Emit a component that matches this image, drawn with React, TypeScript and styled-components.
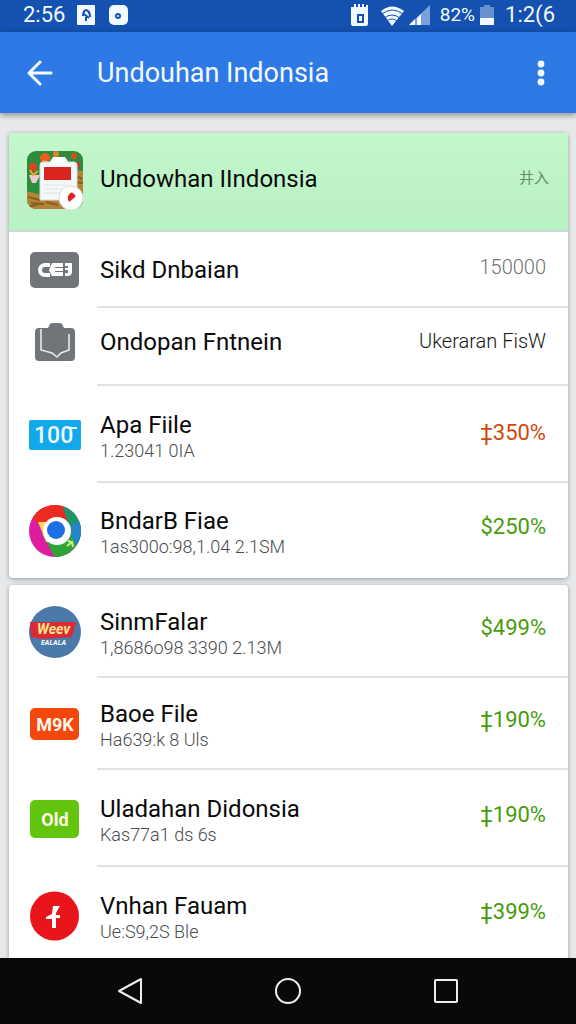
import React from "react";
import styled, { createGlobalStyle, css } from "styled-components";

const GlobalStyle = createGlobalStyle`
  *, *::before, *::after { box-sizing: border-box; }
  body {
    margin: 0;
    font-family: Roboto, "Noto Sans CJK SC", sans-serif;
    color: #0a0a0a;
    background: #e6e8e9;
  }
  h1, h2, p, ul { margin: 0; padding: 0; font-weight: 400; }
  ul { list-style: none; }
`;

const Screen = styled.div`
  display: flex;
  flex-direction: column;
  height: 100vh;
`;

const StatusBar = styled.div`
  flex: none;
  display: flex;
  align-items: center;
  justify-content: space-between;
  height: 32px;
  padding: 0 21px 2px 23px;
  background: #1451b0;
  color: #f2faff;
  font-size: 22px;
  line-height: 28px;
`;

const StatusGroup = styled.div<{ $gap: number }>`
  display: flex;
  align-items: center;
  gap: ${(p) => p.$gap}px;
`;

const Battery = styled.span`
  display: flex;
  align-items: center;
  gap: 4px;
  font-size: 19px;
`;

const AppBar = styled.header`
  flex: none;
  z-index: 1;
  display: flex;
  align-items: center;
  height: 81px;
  padding: 0 15px 0 20px;
  background: #2f79e6;
  color: #f2faff;
  box-shadow: 0 2px 6px rgba(0, 0, 0, 0.4);
`;

const AppTitle = styled.h1`
  flex: 1;
  padding-left: 37px;
  font-size: 27px;
  line-height: 32px;
`;

const IconButton = styled.button`
  display: flex;
  align-items: center;
  justify-content: center;
  width: 40px;
  height: 40px;
  padding: 0;
  border: 0;
  background: none;
  color: inherit;
  cursor: pointer;
`;

const Content = styled.main`
  flex: 1;
  min-height: 0;
  display: flex;
  flex-direction: column;
  gap: 7px;
  padding: 20px 8px 0 9px;
  overflow-y: auto;
  scrollbar-width: none;
`;

const Card = styled.ul`
  flex: none;
  border-radius: 4px;
  background: #fff;
  box-shadow: 0 1px 4px rgba(50, 60, 75, 0.45);
`;

const Body = styled.div`
  flex: 1;
  min-width: 0;
  display: flex;
  align-items: center;
  justify-content: space-between;
  gap: 12px;
  padding: 0 22px 0 3px;
  border-bottom: 2px solid #dfe1e4;
`;

const IconCell = styled.div`
  flex: none;
  display: flex;
  align-items: center;
  justify-content: center;
  width: 88px;
  padding-left: 3px;
`;

type Kind = "featured" | "single" | "raised" | "double";

const Row = styled.li<{ $height: number; $kind: Kind }>`
  display: flex;
  min-height: ${(p) => p.$height}px;
  &:last-child ${Body} { border-bottom-color: transparent; }
  ${(p) =>
    p.$kind === "featured" &&
    css`
      border-radius: 4px 4px 0 0;
      background: linear-gradient(#c3f7cc, #b8f1c3);
      border-bottom: 2px solid #ccd9d0;
      ${Body} { border-bottom: 0; padding-bottom: 8px; padding-right: 19px; }
      ${IconCell} { padding-bottom: 4px; }
    `}
  ${(p) =>
    p.$kind === "raised" &&
    css`
      ${Body} { padding-bottom: 10px; }
      ${IconCell} { padding-bottom: 10px; }
    `}
`;

const Texts = styled.div<{ $kind: Kind }>`
  padding-top: ${(p) => (p.$kind === "double" ? 6 : 2)}px;
`;

const Title = styled.h2`
  font-size: 24px;
  line-height: 28px;
  white-space: nowrap;
`;

const Detail = styled.p`
  color: #4a4c4f;
  font-size: 18px;
  font-weight: 300;
  line-height: 24px;
  white-space: nowrap;
`;

type Tone = "up" | "down" | "muted" | "plain" | "mark";

const tones: Record<Tone, ReturnType<typeof css>> = {
  up: css`color: #469c0c; font-size: 22px; padding-bottom: 6px;`,
  down: css`color: #d0480c; font-size: 22px; padding-bottom: 2px;`,
  muted: css`color: #6f7174; font-size: 20px; font-weight: 300; padding-bottom: 4px;`,
  plain: css`color: #161616; font-size: 20px; font-weight: 300;`,
  mark: css`color: #6b8c72; font-size: 15px;`,
};

const Value = styled.span<{ $tone: Tone }>`
  line-height: 26px;
  white-space: nowrap;
  ${(p) => tones[p.$tone]}
`;

const NavBar = styled.nav`
  flex: none;
  z-index: 1;
  display: flex;
  align-items: center;
  justify-content: center;
  gap: 118px;
  height: 66px;
  background: #090909;
  color: #eee;
`;

const FeaturedIcon = () => (
  <svg width="58" height="60" viewBox="0 0 58 60" aria-hidden="true">
    <defs>
      <clipPath id="tile"><rect x="1" y="1" width="56" height="58" rx="9" /></clipPath>
    </defs>
    <g clipPath="url(#tile)">
      <rect width="58" height="60" fill="#2c8c3b" />
      <path d="M0 41 L16 45 L46 20 L58 21 V60 H0Z" fill="#b48339" />
      <path d="M2 47l12 3M5 53l13 1M20 52l12 3M48 25l8 4M50 32l7 1M3 57l10-3" stroke="#84601f" strokeWidth="2" />
      <circle cx="19" cy="8" r="5" fill="#ea5d1c" />
      <circle cx="7" cy="17" r="4" fill="#e2411d" />
      <circle cx="48" cy="6" r="3" fill="#e4481f" />
      <circle cx="51" cy="15" r="3" fill="#dc2d28" />
      <circle cx="30" cy="4" r="3" fill="#ef7c2c" />
      <path d="M3 25h11l-4 8H6z" fill="#eccbd4" />
      <path d="M4 20l3 5 5-4M17 11l5 2" stroke="#f4a13a" strokeWidth="2" fill="none" />
    </g>
    <path d="M17 12h8l2-4h12l3 4h6q3 0 3 3v35H14V15q0-3 3-3Z" fill="#f5f8f8" stroke="#d5dddd" />
    <path d="M27 7h12l3 5H24Z" fill="#fff" />
    <rect x="18" y="17" width="27" height="13" fill="#da2420" />
    <path d="M18 35h24M18 39h22M18 43h18" stroke="#dce5ea" />
    <circle cx="45" cy="48" r="12" fill="#fff" stroke="#d8dedb" />
    <path d="M42 46q3-6 6-2 3 2 0 4l-5 4q-2-3-1-6Z" fill="#e02323" />
  </svg>
);

const CardIcon = () => (
  <svg width="50" height="38" viewBox="0 0 50 38" aria-hidden="true">
    <rect x="0" y="1" width="49" height="36" rx="5" fill="#717579" />
    <path d="M20 14h-5a5 5 0 0 0 0 10h5" fill="none" stroke="#fff" strokeWidth="4" />
    <path d="M22 12h11v4h-8v1h8v3h-8v1h8v4H22l-3-6Z" fill="#fff" />
    <path d="M35 12h7v9q0 4-5 4h-2v-3h3v-3h-3v-2h3v-2h-3z" fill="#fff" />
  </svg>
);

const ClipboardIcon = () => (
  <svg width="42" height="42" viewBox="0 0 42 42" aria-hidden="true">
    <path d="M5 7h9l2-4q1-1 3-1h6q2 0 3 1l2 4h7q4 0 4 4v25q0 4-4 4H5q-4 0-4-4V11q0-4 4-4Z" fill="#717579" />
    <path d="M7 8v21l11 3 5 4 4-4 8-3V13" fill="none" stroke="#e8eaea" strokeWidth="1.6" />
  </svg>
);

const HundredIcon = () => (
  <svg width="52" height="30" viewBox="0 0 52 30" aria-hidden="true">
    <rect x="0" y="0" width="52" height="30" rx="2" fill="#12a9ec" />
    <text x="5" y="23" fill="#edfaff" fontFamily="Roboto, sans-serif" fontSize="23" fontWeight="500">100</text>
    <path d="M40 8h8" stroke="#edfaff" strokeWidth="2" />
  </svg>
);

const BrowserIcon = () => (
  <svg width="52" height="54" viewBox="0 0 52 54" aria-hidden="true">
    <defs>
      <clipPath id="disc"><ellipse cx="26" cy="27" rx="26" ry="26" /></clipPath>
    </defs>
    <g clipPath="url(#disc)">
      <rect width="52" height="54" fill="#dd1ca0" />
      <path d="M0 15V0h36l4 20H10L4 15Z" fill="#eb2b22" />
      <path d="M33 0h19v36H37l2-17Z" fill="#1c9668" />
      <path d="M41 22l11-6v23l-8 3Z" fill="#2386c8" />
      <path d="M13 30l29 2 6 9-12 13H26Z" fill="#2da33a" />
      <path d="M9 18h17v20h-9Z" fill="#f8d75c" />
    </g>
    <circle cx="28" cy="27" r="14" fill="#fff" />
    <circle cx="27" cy="26" r="9" fill="#1b6fe0" />
    <path d="M38 42l5-4 1 5M42 38l-3-1" stroke="#c9f08c" strokeWidth="2" fill="none" />
  </svg>
);

const BadgeIcon = () => (
  <svg width="52" height="52" viewBox="0 0 52 52" aria-hidden="true">
    <circle cx="26" cy="26" r="26" fill="#4a79aa" />
    <path d="M1 16 L47 16 L43 31 L12 33 L2 31Z" fill="#dc2a35" />
    <g fontFamily="Roboto, sans-serif" fontStyle="italic" fontWeight="700">
      <text x="8" y="28" fill="#ffe68b" fontSize="14">Weev</text>
      <text x="12" y="39" fill="#fff" fontSize="7">EALALA</text>
    </g>
  </svg>
);

const TagIcon = ({ color, label, height }: { color: string; label: string; height: number }) => (
  <svg width="50" height={height} viewBox={`0 0 50 ${height}`} aria-hidden="true">
    <rect x="0" y="0" width="49" height={height} rx="5" fill={color} />
    <text x="25" y={height / 2 + 7} textAnchor="middle" fill="#fff6ea" fontFamily="Roboto, sans-serif" fontSize="18" fontWeight="700">
      {label}
    </text>
  </svg>
);

const FlashIcon = () => (
  <svg width="50" height="50" viewBox="0 0 50 50" aria-hidden="true">
    <circle cx="24.5" cy="25" r="24.5" fill="#ea151b" />
    <path d="M23 15h7l-4 7v2h4v3h-4v10h-4v-9h-6v-2l6-3Z" fill="#fff" />
  </svg>
);

type Item = {
  kind: Kind;
  height: number;
  icon: React.ReactNode;
  title: string;
  detail?: string;
  value: string;
  tone: Tone;
};

const cards: Item[][] = [
  [
    { kind: "featured", height: 99, icon: <FeaturedIcon />, title: "Undowhan IIndonsia", value: "井入", tone: "mark" },
    { kind: "single", height: 76, icon: <CardIcon />, title: "Sikd Dnbaian", value: "150000", tone: "muted" },
    { kind: "raised", height: 78, icon: <ClipboardIcon />, title: "Ondopan Fntnein", value: "Ukeraran FisW", tone: "plain" },
    { kind: "double", height: 97, icon: <HundredIcon />, title: "Apa Fiile", detail: "1.23041 0IA", value: "‡350%", tone: "down" },
    { kind: "double", height: 95, icon: <BrowserIcon />, title: "BndarB Fiae", detail: "1as300o:98,1.04 2.1SM", value: "$250%", tone: "up" },
  ],
  [
    { kind: "double", height: 93, icon: <BadgeIcon />, title: "SinmFalar", detail: "1,8686o98 3390 2.13M", value: "$499%", tone: "up" },
    { kind: "double", height: 92, icon: <TagIcon color="#f4470b" label="M9K" height={32} />, title: "Baoe File", detail: "Ha639:k 8 Uls", value: "‡190%", tone: "up" },
    { kind: "double", height: 97, icon: <TagIcon color="#62c40c" label="Old" height={38} />, title: "Uladahan Didonsia", detail: "Kas77a1 ds 6s", value: "‡190%", tone: "up" },
    { kind: "double", height: 97, icon: <FlashIcon />, title: "Vnhan Fauam", detail: "Ue:S9,2S Ble", value: "‡399%", tone: "up" },
  ],
];

export default function App() {
  return (
    <Screen>
      <GlobalStyle />
      <StatusBar>
        <StatusGroup $gap={12}>
          <span>2:56</span>
          <svg width="54" height="20" viewBox="0 0 54 20" aria-hidden="true">
            <rect x="0" y="0" width="18" height="20" rx="1" fill="#f2faff" />
            <path d="M6 11q0-5 3-6 4 1 4 7M7 9l5 4M9 12v4" stroke="#1451b0" strokeWidth="2" fill="none" />
            <rect x="32" y="0" width="19" height="20" rx="5" fill="#f2faff" />
            <circle cx="41" cy="11" r="3" fill="#1451b0" />
            <circle cx="41" cy="11" r="1" fill="#f2faff" />
          </svg>
        </StatusGroup>
        <StatusGroup $gap={10}>
          <svg width="80" height="22" viewBox="0 0 80 22" aria-hidden="true">
            <path d="M1 3h3V0h2v3h2V0h2v3h2V0h2v3h2V1h2v19q0 2-2 2H3q-2 0-2-2Z" fill="#f2faff" />
            <path d="M8 11h5v7H8z" fill="none" stroke="#1451b0" strokeWidth="2" />
            <path d="M31 7q11-9 23 0L42 22Z" fill="#f2faff" />
            <g fill="none" stroke="#1451b0">
              <path d="M32 10q10-8 21 0" />
              <path d="M34 14q8-6 16 0" />
              <path d="M37 17q5-4 10 0" />
            </g>
            <path d="M59 21L80 1v20Z" fill="#7ba1da" />
            <path d="M59 21l6-6v6zM67 14l4-4v11h-4z" fill="#f2faff" />
          </svg>
          <Battery>
            82%
            <svg width="16" height="22" viewBox="0 0 16 22" aria-hidden="true">
              <path d="M1 3h4V1h6v2h4v12H1Z" fill="#6790d0" />
              <path d="M1 14h14v7H1Z" fill="#f2faff" />
            </svg>
          </Battery>
          <span>1:2(6</span>
        </StatusGroup>
      </StatusBar>
      <AppBar>
        <IconButton aria-label="Back">
          <svg width="26" height="26" viewBox="0 0 26 26" fill="none" stroke="currentColor" strokeWidth="3" strokeLinecap="round" strokeLinejoin="round">
            <path d="M13 2L2 13l11 11M3 13h21" />
          </svg>
        </IconButton>
        <AppTitle>Undouhan Indonsia</AppTitle>
        <IconButton aria-label="More options">
          <svg width="8" height="26" viewBox="0 0 8 26" fill="currentColor">
            <circle cx="4" cy="4" r="3.4" />
            <circle cx="4" cy="13" r="3.4" />
            <circle cx="4" cy="22" r="3.4" />
          </svg>
        </IconButton>
      </AppBar>
      <Content>
        {cards.map((items, i) => (
          <Card key={i}>
            {items.map((item) => (
              <Row key={item.title} $height={item.height} $kind={item.kind}>
                <IconCell>{item.icon}</IconCell>
                <Body>
                  <Texts $kind={item.kind}>
                    <Title>{item.title}</Title>
                    {item.detail && <Detail>{item.detail}</Detail>}
                  </Texts>
                  <Value $tone={item.tone}>{item.value}</Value>
                </Body>
              </Row>
            ))}
          </Card>
        ))}
      </Content>
      <NavBar>
        <IconButton aria-label="Back">
          <svg width="26" height="28" viewBox="0 0 26 28" fill="none" stroke="currentColor" strokeWidth="2" strokeLinejoin="round">
            <path d="M2 14L24 2v24Z" />
          </svg>
        </IconButton>
        <IconButton aria-label="Home">
          <svg width="28" height="28" viewBox="0 0 28 28" fill="none" stroke="currentColor" strokeWidth="2">
            <circle cx="14" cy="14" r="12" />
          </svg>
        </IconButton>
        <IconButton aria-label="Recent apps">
          <svg width="26" height="26" viewBox="0 0 26 26" fill="none" stroke="currentColor" strokeWidth="2">
            <rect x="2" y="2" width="22" height="22" rx="1" />
          </svg>
        </IconButton>
      </NavBar>
    </Screen>
  );
}
